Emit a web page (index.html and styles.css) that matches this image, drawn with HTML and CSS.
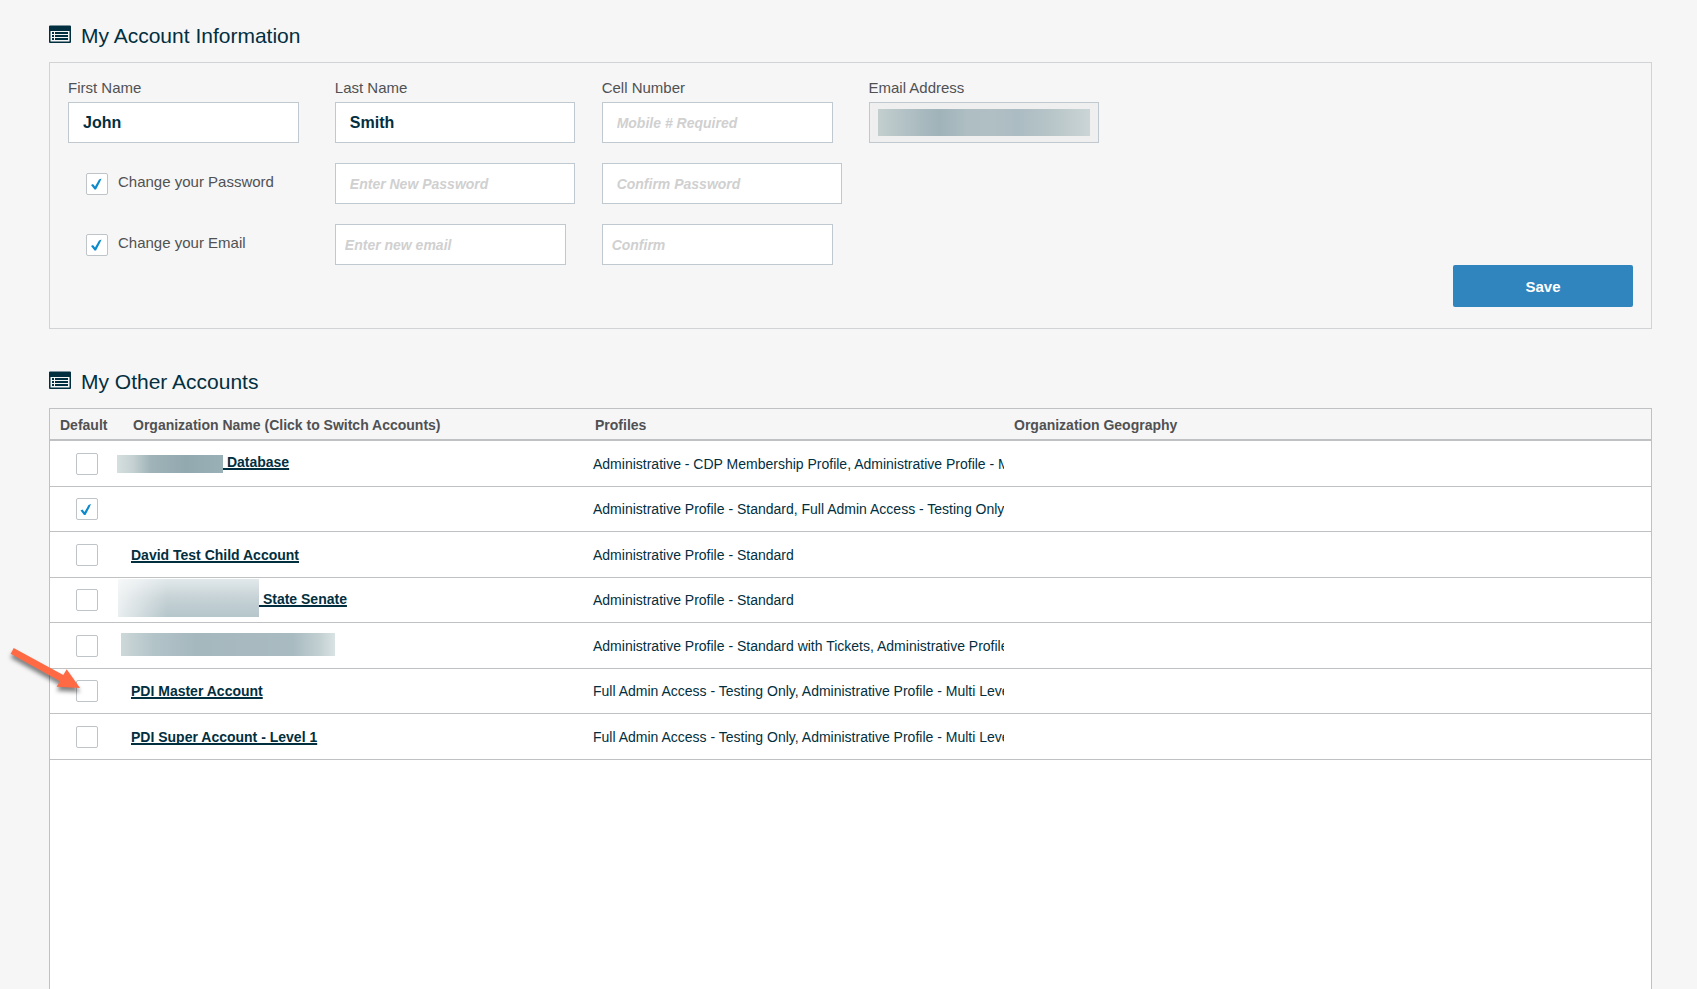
FILE: index.html
```
<!DOCTYPE html>
<html lang="en">
<head>
  <meta charset="utf-8">
  <title>My Account</title>
  <link rel="stylesheet" href="styles.css">
</head>
<body>
  <h2 class="title">
    <svg class="title-icon" width="22" height="20" viewBox="0 0 22 20" aria-hidden="true">
      <path fill="#022f40" fill-rule="evenodd" d="M1 1.500h20q1 0 1 1v15.500q0 1-1 1H1q-1 0-1-1V2.500q0-1 1-1zM1.500 7v10.500h19V7z"/>
      <path fill="#022f40" d="M3 8h2v2H3zM6 8h13v2H6zM3 11h2v2H3zM6 11h13v2H6zM3 14h2v2H3zM6 14h13v2H6z"/>
    </svg>
    My Account Information
  </h2>

  <form class="panel" id="account" onsubmit="return false;">
    <div class="fields">
      <div class="field">
        <label for="firstname">First Name</label>
        <input type="text" id="firstname" class="text" value="John">
      </div>
      <div class="field wide">
        <label for="lastname">Last Name</label>
        <input type="text" id="lastname" class="text" value="Smith">
      </div>
      <div class="field">
        <label for="cell">Cell Number</label>
        <input type="text" id="cell" class="text" placeholder="Mobile # Required">
      </div>
      <div class="field">
        <label for="email">Email Address</label>
        <input type="text" id="email" class="text hidden-email" disabled>
      </div>
    </div>
    <div class="fields">
      <div class="toggle">
        <input type="checkbox" class="check" id="changepw" checked>
        <label for="changepw">Change your Password</label>
      </div>
      <div class="field wide">
        <input type="password" class="text" placeholder="Enter New Password" aria-label="New password">
      </div>
      <div class="field wide">
        <input type="password" class="text" placeholder="Confirm Password" aria-label="Confirm password">
      </div>
    </div>
    <div class="fields">
      <div class="toggle">
        <input type="checkbox" class="check" id="changeemail" checked>
        <label for="changeemail">Change your Email</label>
      </div>
      <div class="field">
        <input type="email" class="text narrow-pad" placeholder="Enter new email" aria-label="New email">
      </div>
      <div class="field">
        <input type="email" class="text narrow-pad" placeholder="Confirm" aria-label="Confirm email">
      </div>
    </div>
    <button type="submit" class="save">Save</button>
  </form>

  <h2 class="title">
    <svg class="title-icon" width="22" height="20" viewBox="0 0 22 20" aria-hidden="true">
      <path fill="#022f40" fill-rule="evenodd" d="M1 1.500h20q1 0 1 1v15.500q0 1-1 1H1q-1 0-1-1V2.500q0-1 1-1zM1.500 7v10.500h19V7z"/>
      <path fill="#022f40" d="M3 8h2v2H3zM6 8h13v2H6zM3 11h2v2H3zM6 11h13v2H6zM3 14h2v2H3zM6 14h13v2H6z"/>
    </svg>
    My Other Accounts
  </h2>

  <div class="grid">
    <table>
      <thead>
        <tr>
          <th class="col-default">Default</th>
          <th class="col-name">Organization Name (Click to Switch Accounts)</th>
          <th class="col-profiles">Profiles</th>
          <th>Organization Geography</th>
        </tr>
      </thead>
      <tbody>
        <tr>
          <td class="pick"><input type="checkbox" class="check" aria-label="Default account 1"></td>
          <td class="name"><a href="#"><span class="redact redact-db"></span> Database</a></td>
          <td>Administrative - CDP Membership Profile, Administrative Profile - Multi Level</td>
          <td></td>
        </tr>
        <tr>
          <td class="pick"><input type="checkbox" class="check" aria-label="Default account 2" checked></td>
          <td class="name"></td>
          <td>Administrative Profile - Standard, Full Admin Access - Testing Only</td>
          <td></td>
        </tr>
        <tr>
          <td class="pick"><input type="checkbox" class="check" aria-label="Default account 3"></td>
          <td class="name"><a href="#">David Test Child Account</a></td>
          <td>Administrative Profile - Standard</td>
          <td></td>
        </tr>
        <tr>
          <td class="pick"><input type="checkbox" class="check" aria-label="Default account 4"></td>
          <td class="name"><a href="#"><span class="redact redact-senate"></span> State Senate</a></td>
          <td>Administrative Profile - Standard</td>
          <td></td>
        </tr>
        <tr>
          <td class="pick"><input type="checkbox" class="check" aria-label="Default account 5"></td>
          <td class="name"><span class="redact redact-full"></span></td>
          <td>Administrative Profile - Standard with Tickets, Administrative Profile - Standard</td>
          <td></td>
        </tr>
        <tr>
          <td class="pick">
            <input type="checkbox" class="check" aria-label="Default account 6">
            <svg class="arrow" width="90" height="64" viewBox="0 0 90 64" aria-hidden="true">
              <path fill="#ff6a45" d="M13.700 7L63.300 34L66.700 28.300L80 47L56.700 45.700L60 40.300L10.700 12.700z"/>
            </svg>
          </td>
          <td class="name"><a href="#">PDI Master Account</a></td>
          <td>Full Admin Access - Testing Only, Administrative Profile - Multi Level</td>
          <td></td>
        </tr>
        <tr>
          <td class="pick"><input type="checkbox" class="check" aria-label="Default account 7"></td>
          <td class="name"><a href="#">PDI Super Account - Level 1</a></td>
          <td>Full Admin Access - Testing Only, Administrative Profile - Multi Level</td>
          <td></td>
        </tr>
      </tbody>
    </table>
  </div>
</body>
</html>
```

FILE: styles.css
```
* {
  box-sizing: border-box;
}
body {
  background-color: #f6f6f6;
  color: #022f40;
  display: flex;
  flex-direction: column;
  font-family: "Liberation Sans", Arial, sans-serif;
  font-size: 14px;
  margin: 0;
  min-height: 100vh;
  padding: 24px 45px 0 49px;
}
.title {
  display: flex;
  font-size: 21px;
  font-weight: normal;
  gap: 10px;
  line-height: 24px;
  margin: 0 0 14px;
}
.panel {
  border: 1px solid #d2d3d4;
  display: flex;
  flex-direction: column;
  margin-bottom: 41px;
  padding: 16px 0 21px;
}
.fields {
  display: grid;
  grid-template-columns: repeat(6, 1fr);
  margin-bottom: 20px;
}
.fields:nth-child(3) {
  margin-bottom: 0;
}
.field {
  padding: 0 18px;
}
.field.wide {
  padding-right: 9px;
}
label {
  color: #505153;
  font-size: 15px;
  line-height: 18px;
}
.field label {
  display: block;
  margin-bottom: 5px;
}
.text {
  background-color: #ffffff;
  border: 1px solid #c1c9d0;
  color: #022f40;
  display: block;
  font-family: inherit;
  font-size: 16px;
  font-weight: bold;
  height: 41px;
  padding: 0 14px;
  width: 100%;
}
.text::placeholder {
  color: #d0d0d0;
  font-size: 14px;
  font-style: italic;
  opacity: 1;
}
.narrow-pad {
  padding: 0 9px;
}
.hidden-email {
  background: linear-gradient(90deg, #c3cfce, #b1c0c5 14%, #9fb3b8 29%, #aebec3 42%, #b0bfc4 54%, #abbcc2 66%, #b6c4c8 80%, #c0cccd 90%, #cbd5d7) content-box, #efefef;
  padding: 6px 8px;
}
.toggle {
  align-items: center;
  display: flex;
  gap: 10px;
  padding-left: 36px;
}
.toggle label {
  margin-bottom: 3px;
}
.check {
  appearance: none;
  background-color: #ffffff;
  border: 1px solid #bfc4c8;
  border-radius: 2px;
  flex: none;
  height: 22px;
  margin: 0;
  vertical-align: middle;
  width: 22px;
}
.check:checked::before {
  background-color: #0c8acb;
  clip-path: path("M4 11.500L6 10.500L8 13L12 6L14.500 5L13 8.500L9 16L7.500 16z");
  content: "";
  display: block;
  height: 20px;
  width: 20px;
}
.save {
  align-self: flex-end;
  background-color: #3085bf;
  border: none;
  border-radius: 2px;
  color: #ffffff;
  font-family: inherit;
  font-size: 15px;
  font-weight: bold;
  height: 42px;
  margin-right: 18px;
  width: 180px;
}
.grid {
  background-color: #ffffff;
  border: 1px solid #c0c1c2;
  border-bottom: none;
  flex: 1;
}
table {
  border-spacing: 0;
  table-layout: fixed;
  width: 100%;
}
th {
  background-color: #f6f6f6;
  border-bottom: 2px solid #c0c1c2;
  color: #505153;
  height: 32px;
  padding: 2px 10px 0;
  text-align: left;
}
td {
  border-bottom: 1px solid #c0c1c2;
  height: 46px;
  overflow: hidden;
  padding: 0 8px;
  white-space: nowrap;
}
tr:nth-child(even) td {
  height: 45px;
}
.col-default {
  width: 73px;
}
.col-name {
  width: 462px;
}
.col-profiles {
  width: 419px;
}
.name {
  overflow: visible;
}
.pick {
  overflow: visible;
  padding: 0;
  position: relative;
  text-align: center;
}
td a {
  color: #022f40;
  font-weight: bold;
  text-decoration: underline 2px;
  text-decoration-skip-ink: none;
  text-underline-offset: 1px;
}

/* blurred out account names */
.redact {
  display: inline-block;
  vertical-align: middle;
}
.redact-db {
  background: linear-gradient(90deg, #d5dfdf, #c5d1d2 15%, #9fb3b8 32%, #92a9af 65%, #9ab0b7);
  height: 18px;
  margin-left: -14px;
  width: 106px;
}
.redact-senate {
  background: linear-gradient(90deg, rgba(255, 255, 255, .7), rgba(255, 255, 255, 0) 35%), linear-gradient(#e2e9eb, #c6d2d6 50%, #b5c6cb);
  height: 38px;
  margin: 0 0 4px -13px;
  width: 141px;
}
.redact-full {
  background: linear-gradient(90deg, #cdd8d9, #b3c4c9 15%, #a5b8be 35%, #a8babf 60%, #a8bbc1 80%, #c3d0d2 93%, #dae3e4);
  height: 23px;
  margin: 0 0 3px -10px;
  width: 214px;
}

.arrow {
  filter: drop-shadow(0 4px 2px rgba(0, 0, 0, .5));
  left: -50px;
  pointer-events: none;
  position: absolute;
  top: -28px;
  z-index: 1;
}
```
